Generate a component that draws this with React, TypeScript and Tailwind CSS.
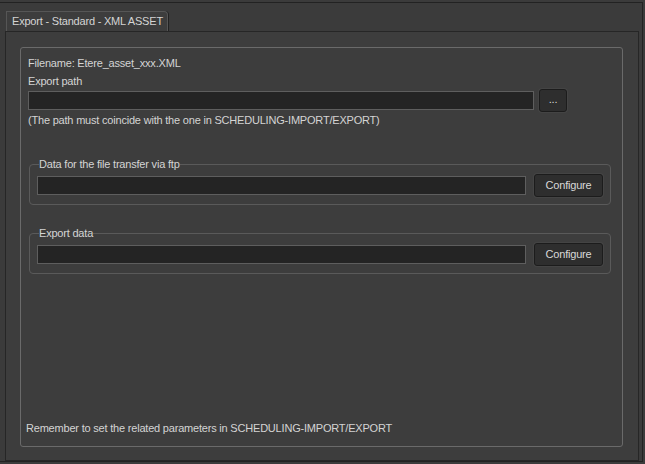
const font = { fontFamily: '"Liberation Sans", Arial, sans-serif' };

const Field = ({ className = "" }: { className?: string }) => (
    <div className={`h-[19px] bg-[#242424] border border-[#5e5e5e] ${className}`} />
);

const Btn = ({ label, className = "" }: { label: string; className?: string }) => (
    <button
        className={`h-[23px] rounded-[3px] border border-[#1c1c1c] bg-[#2e2e2e] text-[11px] text-[#d8d8d8] tracking-[-0.2px] shadow-[0_0_0_1px_#444] flex items-center justify-center ${className}`}
    >
        {label}
    </button>
);

const Group = ({ title }: { title: string }) => (
    <fieldset className="ml-[8px] mr-[11px] rounded-[4px] border border-[#5a5a5a] px-[7px] pt-[3px] pb-[7px]">
        <legend className="ml-[2px] leading-[14px]">{title}</legend>
        <div className="flex items-center gap-[8px]">
            <Field className="flex-1" />
            <Btn label="Configure" className="w-[69px]" />
        </div>
    </fieldset>
);

export default function App() {
    return (
        <div className="w-[645px] h-[464px] bg-[#3b3b3b] pt-[2px] text-[11px] tracking-[-0.2px] text-[#d4d4d4]" style={font}>
            <div className="h-[460px] w-[643px] border-t border-r border-b border-[#222] flex flex-col pl-[5px] pr-[3px]">
                {/* tab strip */}
                <div className="flex pt-[8px] pl-[1px]">
                    <div className="h-[20px] w-[162px] whitespace-nowrap rounded-tr-[4px] border-t border-l border-r border-[#565656] bg-[#3d3d3d] pl-[5px] leading-[19px] shadow-[1px_0_0_#222]">
                        Export - Standard - XML ASSET
                    </div>
                </div>
                {/* tab pane */}
                <div className="flex-1 border border-[#262626] bg-[#3d3d3d] pt-[15px] pl-[14px] pr-[15px] pb-[13px] flex">
                    <div className="flex-1 rounded-[3px] border border-[#6a6a6a] flex flex-col pt-[6px]">
                        <div className="pl-[7px] leading-[19px]">Filename: Etere_asset_xxx.XML</div>
                        <div className="pl-[7px] leading-[16px]">Export path</div>
                        <div className="flex items-center gap-[5px] pl-[7px] pr-[55px] h-[23px]">
                            <Field className="flex-1" />
                            <Btn label="..." className="w-[28px] pb-[3px]" />
                        </div>
                        <div className="pl-[7px] mt-[1px] leading-[14px]">
                            (The path must coincide with the one in SCHEDULING-IMPORT/EXPORT)
                        </div>
                        <div className="mt-[30px]">
                            <Group title="Data for the file transfer via ftp" />
                        </div>
                        <div className="mt-[21px]">
                            <Group title="Export data" />
                        </div>
                        <div className="mt-auto pl-[5px] pb-[11px] leading-[14px]">
                            Remember to set the related parameters in SCHEDULING-IMPORT/EXPORT
                        </div>
                    </div>
                </div>
            </div>
        </div>
    );
}
